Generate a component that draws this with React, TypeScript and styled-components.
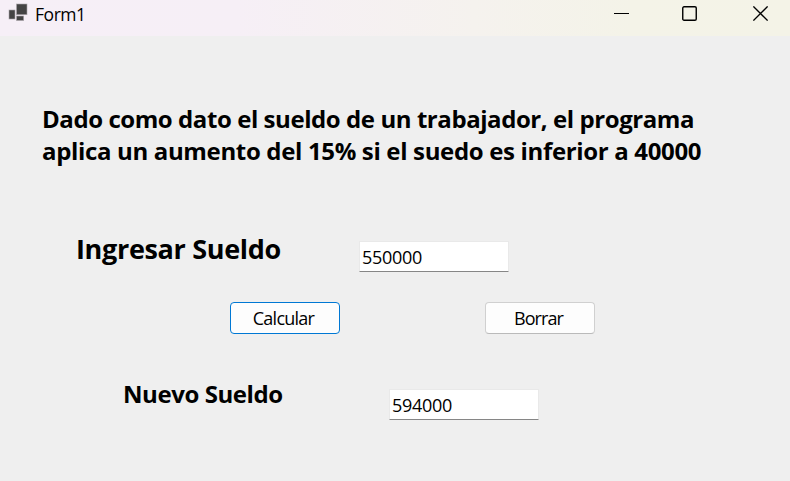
import React from 'react';
import styled, { createGlobalStyle } from 'styled-components';

const GlobalStyle = createGlobalStyle`
  * { box-sizing: border-box; }
  body { margin: 0; background: #efefef; font-family: "Segoe UI", "Open Sans", "Noto Sans", sans-serif; color: #000; overflow: hidden; }
`;

const Window = styled.main`
  width: 790px;
  height: 481px;
  display: flex;
  flex-direction: column;
  background: #efefef;
`;

const TitleBar = styled.header`
  height: 36px;
  flex: none;
  display: flex;
  align-items: flex-start;
  padding-left: 8px;
  background: linear-gradient(90deg, #f6eff7 0%, #f6eff6 30%, #f5f2ee 60%, #f4f3e8 80%, #f4f3e7 100%);
`;

const AppIcon = styled.svg`
  width: 20px;
  height: 20px;
  margin-top: 3px;
`;

const Title = styled.span`
  margin-left: 7px;
  font-size: 17.5px;
  line-height: 28px;
  letter-spacing: -0.45px;
`;

const Controls = styled.div`
  margin-left: auto;
  display: flex;
`;

const Control = styled.button<{ $width: number }>`
  width: ${(p) => p.$width}px;
  height: 27px;
  padding: 0;
  border: 0;
  background: transparent;
  display: flex;
  align-items: center;
  justify-content: center;
`;

const Body = styled.form`
  display: flex;
  flex-direction: column;
  align-items: flex-start;
`;

const Description = styled.p`
  margin: 67px 0 0 42px;
  font-size: 24px;
  font-weight: 700;
  line-height: 32px;
`;

const Line = styled.span<{ $spacing: number }>`
  display: block;
  white-space: nowrap;
  letter-spacing: ${(p) => p.$spacing}px;
`;

const Row = styled.div<{ $top: number; $left: number }>`
  display: flex;
  align-items: flex-start;
  margin: ${(p) => p.$top}px 0 0 ${(p) => p.$left}px;
`;

const Label = styled.label<{ $size: number; $width: number; $spacing: number; $drop: number }>`
  width: ${(p) => p.$width}px;
  height: 32px;
  margin-top: ${(p) => p.$drop}px;
  margin-bottom: ${(p) => -p.$drop - 1}px;
  font-size: ${(p) => p.$size}px;
  font-weight: 700;
  line-height: 32px;
  white-space: nowrap;
  letter-spacing: ${(p) => p.$spacing}px;
`;

const Field = styled.input`
  width: 150px;
  height: 31px;
  padding: 0 0 0 2px;
  border: 1px solid #e9e9e9;
  border-bottom-color: #868686;
  border-radius: 1px;
  background: #fff;
  color: #000;
  font: 18px "Segoe UI", "Open Sans", "Noto Sans", sans-serif;
  letter-spacing: -0.3px;
  outline: 0;
`;

const Actions = styled.div`
  display: flex;
  gap: 145px;
  margin: 30px 0 0 230px;
`;

const Button = styled.button<{ $primary?: boolean; $spacing: number }>`
  width: 110px;
  height: 32px;
  padding: 0 3px 1px 0;
  border: 1px solid ${(p) => (p.$primary ? '#0078d4' : '#d0d0d0')};
  border-bottom-color: ${(p) => (p.$primary ? '#0078d4' : '#bababa')};
  border-radius: 4px;
  background: #fdfdfd;
  color: #000;
  font: 18px "Segoe UI", "Open Sans", "Noto Sans", sans-serif;
  letter-spacing: ${(p) => p.$spacing}px;
`;

export default function App() {
  return (
    <>
      <GlobalStyle />
      <Window>
        <TitleBar>
          <AppIcon viewBox="0 0 20 20" fill="#444444" stroke="#aaa6ab" strokeWidth="0.6">
            <rect x="8.5" y="1" width="10.5" height="10.7" />
            <rect x="1" y="7" width="6" height="9" />
            <rect x="8.5" y="13" width="7.2" height="4.5" />
          </AppIcon>
          <Title>Form1</Title>
          <Controls>
            <Control type="button" aria-label="Minimizar" $width={54}>
              <svg width="15" height="15"><path d="M0 7.5H15" stroke="#000" /></svg>
            </Control>
            <Control type="button" aria-label="Maximizar" $width={83}>
              <svg width="15" height="15" fill="none">
                <rect x="0.75" y="0.75" width="13.5" height="13.5" rx="1.3" stroke="#000" strokeWidth="1.4" />
              </svg>
            </Control>
            <Control type="button" aria-label="Cerrar" $width={59}>
              <svg width="15" height="15"><path d="M0.4 0.4L14.6 14.6M14.6 0.4L0.4 14.6" stroke="#000" strokeWidth="1.3" /></svg>
            </Control>
          </Controls>
        </TitleBar>
        <Body>
          <Description>
            <Line $spacing={-0.43}>Dado como dato el sueldo de un trabajador, el programa</Line>
            <Line $spacing={-0.34}>aplica un aumento del 15% si el suedo es inferior a 40000</Line>
          </Description>
          <Row $top={74} $left={76}>
            <Label htmlFor="sueldo" $size={27} $width={283} $spacing={-0.33} $drop={-8}>Ingresar Sueldo</Label>
            <Field id="sueldo" defaultValue="550000" />
          </Row>
          <Actions>
            <Button type="button" $primary $spacing={-0.75}>Calcular</Button>
            <Button type="button" $spacing={-0.9}>Borrar</Button>
          </Actions>
          <Row $top={55} $left={123}>
            <Label htmlFor="nuevo" $size={24} $width={266} $spacing={-0.42} $drop={-11}>Nuevo Sueldo</Label>
            <Field id="nuevo" defaultValue="594000" />
          </Row>
        </Body>
      </Window>
    </>
  );
}
